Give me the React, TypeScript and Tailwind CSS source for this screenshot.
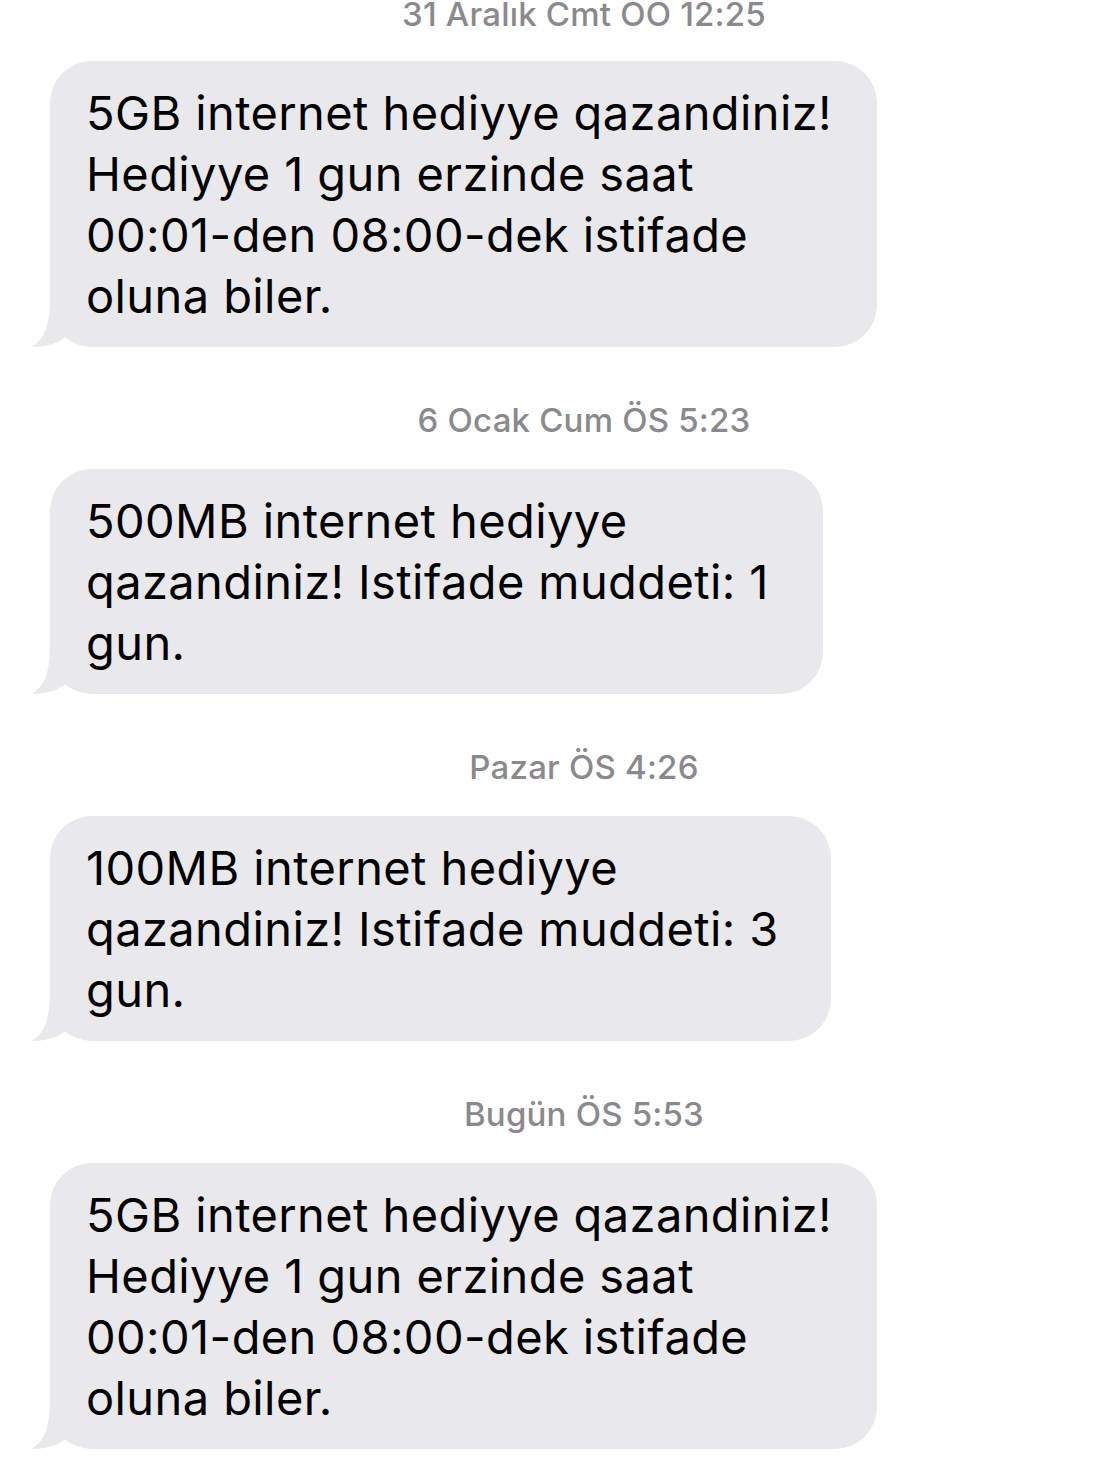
const font = { fontFamily: "Inter, 'Noto Sans', sans-serif" };

type Msg = { time: string; lines: string[]; w: string };

const messages: Msg[] = [
  {
    time: "31 Aralık Cmt OO 12:25",
    lines: ["5GB internet hediyye qazandiniz!", "Hediyye 1 gun erzinde saat", "00:01-den 08:00-dek istifade", "oluna biler."],
    w: "w-[827px]",
  },
  {
    time: "6 Ocak Cum ÖS 5:23",
    lines: ["500MB internet hediyye", "qazandiniz! Istifade muddeti: 1", "gun."],
    w: "w-[773px]",
  },
  {
    time: "Pazar ÖS 4:26",
    lines: ["100MB internet hediyye", "qazandiniz! Istifade muddeti: 3", "gun."],
    w: "w-[781px]",
  },
  {
    time: "Bugün ÖS 5:53",
    lines: ["5GB internet hediyye qazandiniz!", "Hediyye 1 gun erzinde saat", "00:01-den 08:00-dek istifade", "oluna biler."],
    w: "w-[827px]",
  },
];

function Tail() {
  return (
    <svg className="absolute bottom-0 left-[-18px]" width="60" height="50" viewBox="0 0 60 50">
      <path d="M18 0 C18 30 12 42 0 50 C14 50 28 46 36 38 C42 44 50 48 60 50 L60 0 Z" fill="#e9e9eb" />
    </svg>
  );
}

function Bubble({ m }: { m: Msg }) {
  return (
    <div className={`relative ${m.w} ml-[50px] rounded-[42px] bg-[#e9e9eb] pl-[36px] pr-[20px] py-[21px]`}>
      <Tail />
      <div className="relative text-[47px] leading-[61px] text-black tracking-[0.4px]" style={font}>
        {m.lines.map((l, i) => (
          <div key={i} className="whitespace-nowrap">{l}</div>
        ))}
      </div>
    </div>
  );
}

export default function App() {
  return (
    <div className="w-[1112px] h-[1477px] overflow-hidden bg-white mt-[-15px]" style={font}>
      {messages.map((m, i) => (
        <div key={i} className={i === 0 ? "" : "mt-[44px]"}>
          <div className="flex justify-center pl-[56px] h-[60px] items-center text-[33px] font-medium tracking-[0.2px] text-[#8a8a8e]">
            {m.time}
          </div>
          <div className={i === 0 ? "mt-[16px]" : "mt-[18px]"}>
            <Bubble m={m} />
          </div>
        </div>
      ))}
    </div>
  );
}
